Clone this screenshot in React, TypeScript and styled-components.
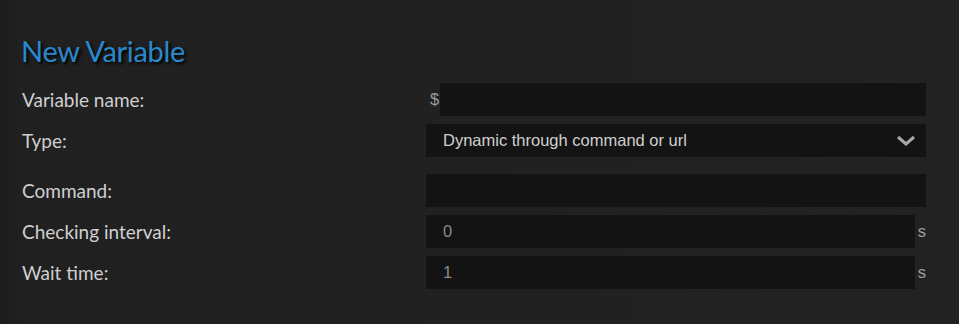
import styled, { createGlobalStyle } from "styled-components";

const GlobalStyle = createGlobalStyle`
  html, body {
    margin: 0;
    padding: 0;
    background: #212121;
  }
`;

type Field = {
  label: string;
  kind: "text" | "select";
  value?: string;
  prefix?: string;
  unit?: string;
  spaced?: boolean;
};

const fields: Field[] = [
  { label: "Variable name:", kind: "text", prefix: "$" },
  { label: "Type:", kind: "select", value: "Dynamic through command or url", spaced: true },
  { label: "Command:", kind: "text" },
  { label: "Checking interval:", kind: "text", value: "0", unit: "s" },
  { label: "Wait time:", kind: "text", value: "1", unit: "s" },
];

export default function App() {
  return (
    <Page>
      <GlobalStyle />
      <Title>New Variable</Title>
      <Form>
        {fields.map((f) => (
          <Row key={f.label} $spaced={f.spaced}>
            <Label>{f.label}</Label>
            <FieldWrap>
              {f.prefix && <Prefix>{f.prefix}</Prefix>}
              {f.kind === "select" ? (
                <SelectBox>
                  <span>{f.value}</span>
                  <svg width="20" height="12" viewBox="0 0 20 12">
                    <path d="M2 2 L10 9 L18 2" fill="none" stroke="#a8a8a8" strokeWidth="3" />
                  </svg>
                </SelectBox>
              ) : (
                <TextBox $muted={!!f.unit}>{f.value}</TextBox>
              )}
              {f.unit && <Unit>{f.unit}</Unit>}
            </FieldWrap>
          </Row>
        ))}
      </Form>
    </Page>
  );
}

const Page = styled.div`
  width: 959px;
  height: 324px;
  box-sizing: border-box;
  padding: 33px 33px 0 21px;
  background: linear-gradient(90deg, #1c1c1c 0px, #202020 20px, #222 100%);
  font-family: Lato, "Open Sans", sans-serif;
`;

const Title = styled.h1`
  margin: 0 0 15px 0;
  font-weight: 400;
  font-size: 29px;
  letter-spacing: -0.3px;
  line-height: 35px;
  color: #2a88cc;
  text-shadow: 2px 2px 3px #000;
`;

const Form = styled.div`
  display: flex;
  flex-direction: column;
`;

const Row = styled.div<{ $spaced?: boolean }>`
  display: flex;
  align-items: center;
  height: 33px;
  margin-bottom: ${(p) => (p.$spaced ? "17px" : "8px")};
`;

const Label = styled.div`
  width: 405px;
  padding-left: 1px;
  box-sizing: border-box;
  font-size: 19px;
  color: #cfcfcf;
`;

const FieldWrap = styled.div`
  flex: 1;
  display: flex;
  align-items: center;
  height: 100%;
`;

const Prefix = styled.span`
  width: 14px;
  padding-left: 4px;
  box-sizing: border-box;
  font-family: "Liberation Sans", Arial, sans-serif;
  font-size: 16.5px;
  color: #9a9a9a;
`;

const TextBox = styled.div<{ $muted?: boolean }>`
  flex: 1;
  height: 100%;
  display: flex;
  align-items: center;
  padding-left: 17px;
  background: #131313;
  font-family: "Liberation Sans", Arial, sans-serif;
  font-size: 16.5px;
  color: ${(p) => (p.$muted ? "#8a8a8a" : "#cfcfcf")};
`;

const SelectBox = styled.div`
  flex: 1;
  height: 100%;
  display: flex;
  align-items: center;
  justify-content: space-between;
  padding: 0 10px 0 17px;
  background: #131313;
  font-family: "Liberation Sans", Arial, sans-serif;
  font-size: 16.5px;
  color: #cfcfcf;
`;

const Unit = styled.span`
  width: 11px;
  text-align: right;
  font-family: "Liberation Sans", Arial, sans-serif;
  font-size: 16.5px;
  color: #a0a0a0;
`;
